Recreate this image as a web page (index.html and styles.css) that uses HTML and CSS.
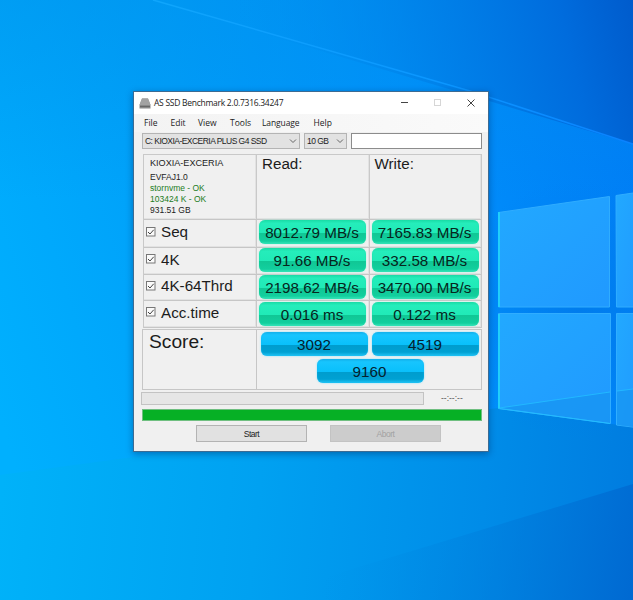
FILE: index.html
```html
<!DOCTYPE html>
<html lang="en">
<head>
<meta charset="utf-8">
<title>AS SSD Benchmark</title>
<link rel="stylesheet" href="styles.css">
</head>
<body>
<main class="desktop">
  <svg class="wallpaper" viewBox="0 0 633 600" aria-hidden="true">
    <defs>
      <linearGradient id="sky" gradientUnits="userSpaceOnUse" x1="0" y1="420" x2="660" y2="220">
        <stop offset="0" stop-color="#00b0fe"/><stop offset=".35" stop-color="#009ff9"/><stop offset=".7" stop-color="#008ffb"/><stop offset="1" stop-color="#007df5"/>
      </linearGradient>
      <linearGradient id="top" gradientUnits="userSpaceOnUse" x1="250" y1="90" x2="640" y2="0">
        <stop offset="0" stop-color="#0092f0" stop-opacity="0"/><stop offset=".45" stop-color="#0080e8" stop-opacity=".75"/><stop offset=".8" stop-color="#006cdd"/><stop offset="1" stop-color="#005acb"/>
      </linearGradient>
      <linearGradient id="low" gradientUnits="userSpaceOnUse" x1="0" y1="500" x2="640" y2="560">
        <stop offset="0" stop-color="#00b2f9"/><stop offset=".4" stop-color="#00a1f1"/><stop offset=".75" stop-color="#008ce8"/><stop offset="1" stop-color="#007bdf"/>
      </linearGradient>
      <linearGradient id="corner" gradientUnits="userSpaceOnUse" x1="330" y1="540" x2="650" y2="600">
        <stop offset="0" stop-color="#008ee4" stop-opacity="0"/><stop offset="1" stop-color="#0066d0"/>
      </linearGradient>
      <linearGradient id="ray" gradientUnits="userSpaceOnUse" x1="150" y1="0" x2="633" y2="145">
        <stop offset="0" stop-color="#0fa6fc"/><stop offset=".6" stop-color="#0b96ff"/><stop offset="1" stop-color="#0a82ff"/>
      </linearGradient>
      <linearGradient id="shade" x1="0" y1="0" x2="0" y2="1">
        <stop offset="0" stop-color="#0092ea" stop-opacity=".45"/><stop offset="1" stop-color="#0092ea" stop-opacity="0"/>
      </linearGradient>
      <linearGradient id="pane" x1="0" y1="0" x2="1" y2="1">
        <stop offset="0" stop-color="#22a9ff"/><stop offset="1" stop-color="#2099ff"/>
      </linearGradient>
      <radialGradient id="glow" gradientUnits="userSpaceOnUse" cx="580" cy="310" r="130">
        <stop offset="0" stop-color="#007aea" stop-opacity=".8"/><stop offset="1" stop-color="#007cec" stop-opacity="0"/>
      </radialGradient>
    </defs>
    <rect width="633" height="600" fill="url(#sky)"/>
    <rect width="633" height="200" fill="url(#shade)"/>
    <path d="M150 0H633V144Z" fill="url(#top)"/>
    <path d="M153 0L470 91L633 144" stroke="url(#ray)" stroke-width="1.5" fill="none"/>
    <path d="M0 475L498 408L633 427V600H0Z" fill="url(#low)"/>
    <path d="M250 600L633 484V600Z" fill="url(#corner)"/>
    <rect x="430" y="170" width="203" height="280" fill="url(#glow)"/>
    <g fill="url(#pane)" stroke="#30adff" stroke-width="1">
      <path d="M498.5 212.5L609.5 196.500V307H498.500Z"/>
      <path d="M616 195.500L640 192V307H616.500Z"/>
      <path d="M498.500 313.500H610.500V423.500L498.500 408.500Z"/>
      <path d="M616.500 313.500H640V428L616.500 425Z"/>
    </g>
    <path d="M500 408L610 392V423Z M617 391L633 389V427L617 425Z" fill="#1593f0" opacity=".65"/>
    <path d="M499 408L610 392M617 391L633 389" stroke="#22b8ff" stroke-width="1"/>
    <path d="M499 212V307M499 314V408.500" stroke="#20d5fb" stroke-width="1.700"/>
    <path d="M499 408.500L610 423.500" stroke="#22bdff" stroke-width="1"/>
  </svg>

  <section class="window">
    <header class="titlebar">
      <svg class="app-icon" viewBox="0 0 12 11"><path d="M3 .5H9L11.500 7V10.500H.5V7Z" fill="#898989"/><path d="M3 .5H9L11.500 7H.5Z" fill="#a2a2a2"/><path d="M1 8.500H11" stroke="#686868"/></svg>
      <h1>AS SSD Benchmark 2.0.7316.34247</h1>
      <svg class="controls" viewBox="0 0 76 12"><path d="M1 5.500H8" stroke="#444" stroke-width="1"/><rect x="34.500" y="2.500" width="6" height="6" fill="none" stroke="#d6d6d6"/><path d="M67.500 2.500L74.500 9.500M74.500 2.500L67.500 9.500" stroke="#444" stroke-width="1"/></svg>
    </header>
    <nav class="menu"><span class="m-file">File</span><span class="m-edit">Edit</span><span class="m-view">View</span><span class="m-tools">Tools</span><span class="m-lang">Language</span><span>Help</span></nav>
    <div class="toolbar">
      <div class="combo drive"><span>C: KIOXIA-EXCERIA PLUS G4 SSD</span><svg viewBox="0 0 8 6"><path d="M1 1.500L4 4.500L7 1.500" fill="none" stroke="#666"/></svg></div>
      <div class="combo size"><span>10 GB</span><svg viewBox="0 0 8 6"><path d="M1 1.500L4 4.500L7 1.500" fill="none" stroke="#666"/></svg></div>
      <div class="field"></div>
    </div>

    <div class="results">
      <div class="cell info"><p class="model">KIOXIA-EXCERIA</p><p>EVFAJ1.0</p><p class="ok">stornvme - OK</p><p class="ok">103424 K - OK</p><p>931.51 GB</p></div>
      <div class="cell head">Read:</div>
      <div class="cell head">Write:</div>

      <div class="cell test"><svg class="check" viewBox="0 0 10 10"><rect x=".5" y=".5" width="8.500" height="8.500" fill="#fafafa" stroke="#777"/><path d="M2 5L4 7L7.700 2.800" fill="none" stroke="#444"/></svg>Seq</div>
      <div class="cell"><div class="pill">8012.79 MB/s</div></div>
      <div class="cell"><div class="pill">7165.83 MB/s</div></div>

      <div class="cell test"><svg class="check" viewBox="0 0 10 10"><rect x=".5" y=".5" width="8.500" height="8.500" fill="#fafafa" stroke="#777"/><path d="M2 5L4 7L7.700 2.800" fill="none" stroke="#444"/></svg>4K</div>
      <div class="cell"><div class="pill">91.66 MB/s</div></div>
      <div class="cell"><div class="pill">332.58 MB/s</div></div>

      <div class="cell test"><svg class="check" viewBox="0 0 10 10"><rect x=".5" y=".5" width="8.500" height="8.500" fill="#fafafa" stroke="#777"/><path d="M2 5L4 7L7.700 2.800" fill="none" stroke="#444"/></svg>4K-64Thrd</div>
      <div class="cell"><div class="pill">2198.62 MB/s</div></div>
      <div class="cell"><div class="pill">3470.00 MB/s</div></div>

      <div class="cell test"><svg class="check" viewBox="0 0 10 10"><rect x=".5" y=".5" width="8.500" height="8.500" fill="#fafafa" stroke="#777"/><path d="M2 5L4 7L7.700 2.800" fill="none" stroke="#444"/></svg>Acc.time</div>
      <div class="cell"><div class="pill">0.016 ms</div></div>
      <div class="cell"><div class="pill">0.122 ms</div></div>
    </div>

    <div class="score">
      <div class="score-label">Score:</div>
      <div class="score-values">
        <div class="pill blue">3092</div><div class="pill blue">4519</div>
        <div class="pill blue total">9160</div>
      </div>
    </div>

    <div class="progress"><div class="step"></div><span>--:--:--</span></div>
    <div class="overall"></div>
    <footer class="actions"><button>Start</button><button disabled>Abort</button></footer>
  </section>
</main>
</body>
</html>
```
FILE: styles.css
```css
* { box-sizing: border-box; }
body { margin: 0; overflow: hidden; }
h1, p { margin: 0; font-weight: normal; }

.desktop {
  position: relative;
  width: 633px;
  height: 600px;
  overflow: hidden;
  font-family: "Liberation Sans", Arial, sans-serif;
  color: #1c1c1c;
}
.wallpaper { display: block; width: 633px; height: 600px; }

.window {
  position: absolute;
  left: 133px;
  top: 91px;
  width: 356px;
  height: 361px;
  border: 1px solid #3d6b92;
  background: #f0f0f0;
  box-shadow: 0 2px 7px rgba(0, 30, 80, .4);
}

.titlebar {
  display: flex;
  align-items: center;
  height: 22px;
  padding: 0 12px 0 5px;
  background: #fff;
}
.app-icon { width: 12px; height: 11px; margin-right: 3px; }
.titlebar h1 {
  flex: 1;
  font: 8.5px/20px "Open Sans", sans-serif;
  letter-spacing: -.27px;
  white-space: nowrap;
  color: #222;
}
.controls { width: 76px; height: 12px; }

.menu {
  display: flex;
  height: 18px;
  padding-left: 10px;
  background: linear-gradient(90deg, #f3f3f3, #fafafa);
  font: 8.5px/17px "Open Sans", sans-serif;
}
.m-file { width: 26.500px; }
.m-edit { width: 27.500px; }
.m-view { width: 32px; }
.m-tools { width: 32px; }
.m-lang { width: 51.500px; letter-spacing: -.1px; }

.toolbar { display: flex; height: 16px; margin: 1px 6px 0 8px; }
.combo {
  display: flex;
  align-items: center;
  justify-content: space-between;
  padding: 0 2px;
  border: 1px solid #b4b4b4;
  background: #e2e2e2;
  font-size: 8.5px;
  letter-spacing: -.53px;
  white-space: nowrap;
}
.combo svg { width: 8px; height: 6px; }
.drive { width: 158px; margin-right: 4px; }
.size { width: 43px; margin-right: 4px; }
.field { flex: 1; border: 1px solid #8c8c8c; background: #fff; }

.results {
  display: grid;
  grid-template-columns: 113px 112.500px 111.500px;
  grid-template-rows: 65px 28px 27px 26.500px 26.500px;
  width: 339px;
  margin: 4.500px 0 0 9px;
  border: solid #c9c9c9;
  border-width: 1px 1px 0 1px;
  font-size: 15.2px;
}
.cell {
  border-right: 1px solid #c9c9c9;
  border-bottom: 1px solid #c6c6c6;
  box-shadow: inset -1px -1px #e2e2e2;
}
.cell:nth-child(3n) { border-right: 0; }
.info { padding: 2px 0 0 6px; font-size: 8.5px; line-height: 11px; }
.model { font-size: 9.1px; line-height: 12px; margin-bottom: 3px; }
.ok { color: #237c23; }
.head { padding-left: 5px; line-height: 18px; }
.test { display: flex; align-items: center; padding: 0 0 3px 2px; }
.check { width: 10px; height: 10px; margin-right: 5px; }

.pill {
  width: 107px;
  height: 24px;
  margin: .5px 0 0 2px;
  border-radius: 6px;
  background: linear-gradient(#1bdca6 0, #25edbb 14%, #20eab7 54%, #10c795 56%, #12cf9e 88%, #3ee7bd);
  box-shadow: inset 0 0 2px #19dca9, 0 0 2px #a1f5df;
  color: #06251d;
  font-size: 15.2px;
  line-height: 26px;
  text-align: center;
  text-indent: -1px;
}
.pill.blue {
  margin: 0;
  background: linear-gradient(#16aee9 0, #17c5fe 12%, #09c0fb 54%, #009dce 56%, #00a1d3 84%, #24c5f5);
  box-shadow: inset 0 0 2px #12b9f2, 0 0 2px #79dfff;
  color: #04202d;
}

.score {
  display: grid;
  grid-template-columns: 114px 1fr;
  width: 340px;
  height: 61px;
  margin: 1.500px 0 0 8px;
  border: 1px solid #c6c6c6;
}
.score-label {
  padding-left: 6px;
  border-right: 1px solid #c6c6c6;
  font-size: 19.2px;
  line-height: 24px;
}
.score-values {
  display: grid;
  grid-template-columns: 107px 107px;
  grid-template-rows: 24px 24px;
  gap: 3px 4px;
  padding: 2px 0 0 4px;
}
.total { grid-column: 1 / 3; justify-self: center; }

.progress {
  display: flex;
  align-items: center;
  height: 13px;
  margin: 1.500px 6px 0 7px;
  font-size: 8.5px;
  color: #555;
}
.step { width: 283px; height: 13px; margin-right: 17px; border: 1px solid #c3c3c3; background: #e6e6e6; }

.overall { height: 12px; margin: 4px 6px 0 8px; border: 1px solid #6fbf80; background: #06b025; }

.actions { display: flex; gap: 23px; margin: 4.500px 0 0 62px; }
.actions button {
  width: 111px;
  height: 17px;
  padding: 0;
  border: 1px solid #b3b3b3;
  background: #e1e1e1;
  color: #222;
  font: 8.5px "Liberation Sans", Arial, sans-serif;
  letter-spacing: -.5px;
}
.actions button:disabled { border-color: #c3c3c3; background: #cccccc; color: #a2a2a2; }
```
